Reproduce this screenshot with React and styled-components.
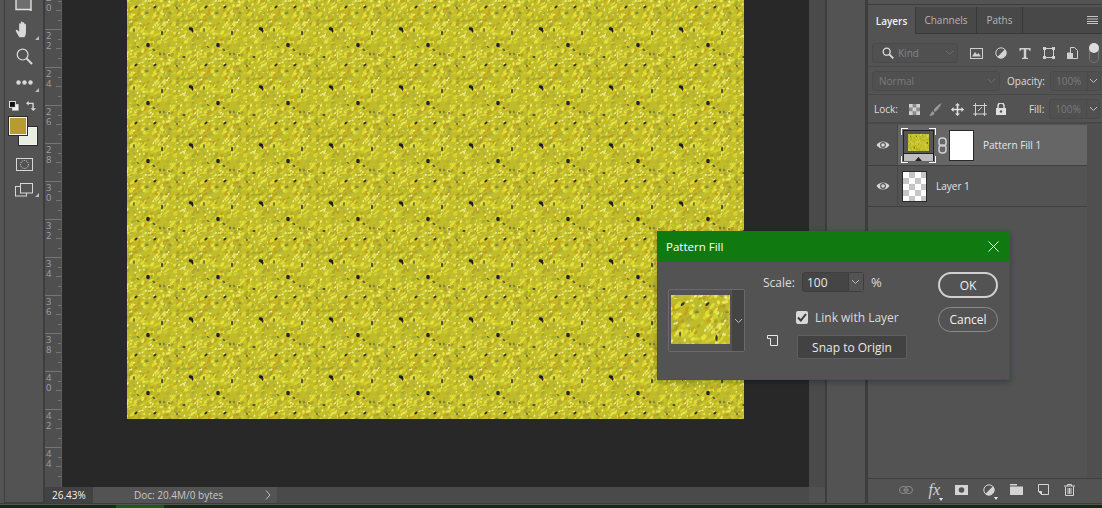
import React from 'react'
import styled, { createGlobalStyle } from 'styled-components'

const GlobalStyle = createGlobalStyle`
  html, body { margin: 0; padding: 0; background: #535353; overflow: hidden; }
  * { box-sizing: border-box; }
`

const RULER = ['20', '22', '24', '26', '28', '30', '32', '34', '36', '38', '40', '42', '44']

// x, y, rx, ry, rotation, colour of the dark seeds in one 70x58 tile
const DARK_SPOTS = [
  [64, 29, 2.4, 1.5, 20, '#1c1c22'], [65.500, 31, 1, 1.800, 0, '#1c1c22'],
  [35, 33, 0.9, 2.400, 0, '#35352a'], [21, 45, 1.800, 2.200, 0, '#22222a'],
  [27, 50, 1.500, 0.900, 30, '#5a5a3c'], [33, 54, 0.700, 1.500, 0, '#4c4c30'],
  [37, 54, 0.600, 1.200, 0, '#5a5a3c'], [42, 55, 1.100, 0.800, 0, '#5c5c3c'],
  [57, 57, 1.600, 1.100, 0, '#44443a'], [9, 7, 1.900, 0.900, -40, '#2c2c20'],
  [28, 7, 1.900, 0.900, -40, '#2c2c20'], [20, 13, 1.800, 0.500, 0, '#5c5c3a'],
  [43, 13, 1.800, 0.500, 0, '#64643e'], [7, 30, 0.800, 2, 0, '#5a5a3c'],
  [11, 47, 1.500, 0.700, 30, '#5a5a3c'], [50, 8, 0.900, 1.300, 0, '#6a6838'],
]

const COLORS = ['#d8d42c', '#e6e23c', '#c8c42a', '#b4b434', '#c2ba26', '#a4ac36', '#c4a21c', '#dedc34', '#bcb82c', '#e8e455', '#aca028', '#d0d030', '#f2f070', '#efeea0']

// small seeded generator so the tile is the same on every load
const makeBlobs = (count) => {
  let seed = 4711
  const rnd = () => {
    seed = (seed * 16807) % 2147483647
    return seed / 2147483647
  }
  const out = []
  for (let i = 0; i < count; i++) {
    const c = Math.floor(rnd() * COLORS.length)
    const pale = c >= 12
    out.push({
      x: rnd() * 76 - 3,
      y: rnd() * 64 - 3,
      rx: pale ? 1.300 : 1.100 + rnd() * 2.200,
      ry: pale ? 0.800 : 0.700 + rnd() * 1,
      rot: -70 + rnd() * 60,
      fill: COLORS[c],
    })
  }
  return out
}

const BLOBS = makeBlobs(600)

const Tile = ({ id, w, h, scale = 1 }) => (
  <>
    <filter id={`${id}-soft`} x="-5%" y="-5%" width="110%" height="110%">
      <feGaussianBlur stdDeviation={0.5 * scale} />
    </filter>
    <pattern id={id} width={w} height={h} patternUnits="userSpaceOnUse">
      <g filter={`url(#${id}-soft)`}>
        <g transform={`scale(${scale})`}>
          <rect x="-3" y="-3" width="76" height="64" fill="#c0bc2c" />
          {BLOBS.map((b, i) => (
            <ellipse key={i} cx={b.x} cy={b.y} rx={b.rx} ry={b.ry} fill={b.fill} transform={`rotate(${b.rot} ${b.x} ${b.y})`} />
          ))}
          {DARK_SPOTS.map(([x, y, rx, ry, rot, fill], i) => (
            <ellipse key={i} cx={x} cy={y} rx={rx} ry={ry} fill={fill} transform={`rotate(${rot} ${x} ${y})`} />
          ))}
        </g>
      </g>
    </pattern>
  </>
)

const Eye = () => (
  <svg width="14" height="10" viewBox="0 0 14 10">
    <path d="M0.5 5C3.5 0.2 10.5 0.2 13.5 5C10.5 9.8 3.5 9.8 0.5 5Z" fill="#d6d6d6" />
    <circle cx="7" cy="5" r="2.9" fill="#535353" />
    <circle cx="7" cy="5" r="1.8" fill="#d6d6d6" />
  </svg>
)

const Chevron = ({ color = '#a8a8a8' }) => (
  <svg width="9" height="6" viewBox="0 0 9 6">
    <path d="M1 1l3.5 3.5L8 1" fill="none" stroke={color} strokeWidth="1" />
  </svg>
)

const Corner = () => (
  <svg width="6" height="6" viewBox="0 0 6 6">
    <path d="M5 1v4H1z" fill="#bdbdbd" />
  </svg>
)

const MenuIcon = () => (
  <svg width="11" height="8" viewBox="0 0 11 8">
    <path d="M0 .5h11M0 3h11M0 5.500h11M0 7.500h11" stroke="#c4c4c4" strokeWidth="1" />
  </svg>
)

const HalfCircle = () => (
  <svg width="12" height="12" viewBox="0 0 12 12">
    <circle cx="6" cy="6" r="5.200" fill="#535353" stroke="#d4d4d4" strokeWidth="1" />
    <path d="M10 2.300A5.500 5.500 0 0 1 2.300 10z" fill="#d4d4d4" />
  </svg>
)

const TOOL = '#d8d8d8'

const App = () => (
  <Page>
    <GlobalStyle />
    <Main>
      <Toolbar>
        <ToolStrip>
          <ToolSlot $h={11} $align="flex-end">
            <svg width="18" height="11" viewBox="0 0 18 11">
              <path d="M1 0v9.500h15V0" fill="#6e6e6e" stroke="#e0e0e0" strokeWidth="1.400" />
              <path d="M17 8v3h-3z" fill="#bdbdbd" />
            </svg>
          </ToolSlot>
          <ToolSlot $h={26} $top={6}>
            <svg width="18" height="18" viewBox="0 0 20 20">
              <path d="M5 18C3 15 1 12 .8 10.500c0-1 1.300-1.200 2-.3L4.600 12V3.500c0-1.300 1.700-1.300 1.800 0V9V1.600c0-1.300 1.900-1.300 2 0V9V2.300c0-1.300 1.900-1.300 2 0V9.500V4c0-1.200 1.800-1.200 1.800 0v8.500c0 2.500-.8 4-1.700 5.500z" fill={TOOL} />
            </svg>
            <CornerMark><Corner /></CornerMark>
          </ToolSlot>
          <ToolSlot $h={24} $top={1}>
            <svg width="17" height="17" viewBox="0 0 18 18">
              <circle cx="7" cy="7" r="5.700" fill="none" stroke={TOOL} strokeWidth="1.300" />
              <path d="M11 11l6 6" stroke={TOOL} strokeWidth="2.200" />
            </svg>
          </ToolSlot>
          <ToolSlot $h={26} $top={1}>
            <svg width="17" height="5" viewBox="0 0 17 5">
              <circle cx="2.500" cy="2.500" r="2.200" fill={TOOL} />
              <circle cx="8.500" cy="2.500" r="2.200" fill={TOOL} />
              <circle cx="14.500" cy="2.500" r="2.200" fill={TOOL} />
            </svg>
            <CornerMark><Corner /></CornerMark>
          </ToolSlot>
          <SwapRow>
            <svg width="10" height="10" viewBox="0 0 11 11">
              <rect x="3.500" y="3.500" width="7" height="7" fill="#f0f0f0" />
              <rect x="0.500" y="0.500" width="6.500" height="6.500" fill="#111" stroke="#f0f0f0" />
            </svg>
            <svg width="10" height="10" viewBox="0 0 11 11">
              <path d="M0 2.500L3 0v1.800h5.500V8H11L8 11 5 8h2V3.200H3V5z" fill={TOOL} />
            </svg>
          </SwapRow>
          <Swatches>
            <BackSwatch />
            <FrontSwatch />
          </Swatches>
          <ToolSlot $h={20} $top={8}>
            <svg width="17" height="13" viewBox="0 0 17 13">
              <rect x=".5" y=".5" width="16" height="12" fill="none" stroke={TOOL} />
              <circle cx="8.500" cy="6.500" r="4" fill="none" stroke={TOOL} strokeDasharray="1 1" />
            </svg>
          </ToolSlot>
          <ToolSlot $h={20} $top={6}>
            <svg width="18" height="14" viewBox="0 0 18 14">
              <rect x=".5" y="3.500" width="11" height="9.500" fill="none" stroke={TOOL} />
              <rect x="5.500" y=".5" width="12" height="9.500" fill="#535353" stroke={TOOL} />
            </svg>
            <CornerMark><Corner /></CornerMark>
          </ToolSlot>
        </ToolStrip>
      </Toolbar>

      <DocColumn>
        <DocBody>
          <Ruler>
            {RULER.map((n, i) => (
              <RulerStep key={n} $first={i === 0}>
                <RulerDigits>{n}</RulerDigits>
              </RulerStep>
            ))}
          </Ruler>
          <Canvas>
            <svg width="617" height="419" style={{ display: 'block' }}>
              <defs>
                <Tile id="fill-big" w={70} h={58} />
              </defs>
              <rect width="617" height="419" fill="url(#fill-big)" />
            </svg>
          </Canvas>
          <ScrollTrack />
        </DocBody>
        <StatusBar>
          <ZoomField>26.43%</ZoomField>
          <DocInfo>
            Doc: 20.4M/0 bytes
            <svg width="6" height="10" viewBox="0 0 6 10">
              <path d="M1 .5L5 5 1 9.500" fill="none" stroke="#bdbdbd" />
            </svg>
          </DocInfo>
          <StatusRest />
          <StatusEnd />
        </StatusBar>
      </DocColumn>

      <DockGap />

      <Panel>
        <TabBar>
          <Tab $active $w={48}>Layers</Tab>
          <Tab $w={61}>Channels</Tab>
          <Tab $w={46}>Paths</Tab>
          <TabFill><MenuIcon /></TabFill>
        </TabBar>

        <OptionRow $top={9}>
          <KindField>
            <svg width="12" height="12" viewBox="0 0 12 12">
              <circle cx="4.700" cy="4.700" r="3.500" fill="none" stroke="#dedede" strokeWidth="1.300" />
              <path d="M7.300 7.300l4 4" stroke="#dedede" strokeWidth="1.800" />
            </svg>
            <FieldText>Kind</FieldText>
            <Chevron color="#6d6d6d" />
          </KindField>
          <FilterIcons>
            <svg width="13" height="11" viewBox="0 0 13 11">
              <rect x=".5" y=".5" width="12" height="10" fill="none" stroke="#d0d0d0" />
              <path d="M2 8.500L5 4l2 2.500L8.500 5l2.500 3.500z" fill="#d0d0d0" />
            </svg>
            <HalfCircle />
            <svg width="12" height="11" viewBox="0 0 12 11">
              <path d="M.5 0h11v3h-1L10 1.500H7.200V9.500L9 10v1H3v-1l1.800-.5V1.500H2L1.500 3h-1z" fill="#d0d0d0" />
            </svg>
            <svg width="12" height="12" viewBox="0 0 12 12">
              <rect x="1.500" y="1.500" width="9" height="9" fill="none" stroke="#d0d0d0" />
              <path d="M0 0h3v3H0zM9 0h3v3H9zM0 9h3v3H0zM9 9h3v3H9z" fill="#d0d0d0" />
            </svg>
            <svg width="11" height="12" viewBox="0 0 11 12">
              <path d="M3.500.5h4l3 3v8h-10V6h3z" fill="none" stroke="#d0d0d0" />
              <rect x="0" y="6" width="6" height="6" fill="#d0d0d0" />
            </svg>
          </FilterIcons>
          <FilterToggle />
        </OptionRow>
        <Rule $top={3} />

        <OptionRow $top={4}>
          <BlendField>
            <FieldText $strong>Normal</FieldText>
            <Chevron color="#6d6d6d" />
          </BlendField>
          <OptionLabel $left={7}>Opacity:</OptionLabel>
          <ValueField $left={5}>
            <span>100%</span>
            <ValueArrow><Chevron color="#c0c0c0" /></ValueArrow>
          </ValueField>
        </OptionRow>
        <Rule $top={3} />

        <OptionRow $top={4}>
          <OptionLabel $left={2}>Lock:</OptionLabel>
          <LockIcons>
            <svg width="11" height="11" viewBox="0 0 11 11">
              <rect width="11" height="11" fill="#8a8a8a" />
              <path d="M0 0h3.600v3.600H0zM7.300 0H11v3.600H7.300zM3.600 3.600h3.700v3.700H3.600zM0 7.300h3.600V11H0zM7.300 7.300H11V11H7.300z" fill="#d0d0d0" />
            </svg>
            <svg width="13" height="13" viewBox="0 0 13 13">
              <path d="M12.500 0C9 2 6 4.500 4.500 7.500L6 9C8.800 7 11 4 12.500 0zM3.800 8.200C2.300 8.500 2.300 11 0 12.500c3 .5 5.500-.5 5.400-2.700z" fill="#9a9a9a" />
            </svg>
            <svg width="13" height="13" viewBox="0 0 13 13">
              <path d="M6.500 0L9 2.500H7.300v3.200h3.200V4L13 6.500 10.500 9V7.300H7.300v3.200H9L6.500 13 4 10.500h1.700V7.300H2.500V9L0 6.500 2.500 4v1.700h3.200V2.500H4z" fill="#e0e0e0" />
            </svg>
            <svg width="14" height="13" viewBox="0 0 14 13">
              <rect x="2.500" y="2.500" width="9" height="8.500" fill="none" stroke="#d0d0d0" />
              <path d="M0 2.500h4M2.500 0v4M10 2.500h4M11.500 0v4M0 11h4M2.500 9v4M10 11h4M11.500 9v4M5 8l4-4" stroke="#d0d0d0" fill="none" />
            </svg>
            <svg width="10" height="12" viewBox="0 0 10 12">
              <path d="M2 5V3a3 3 0 0 1 6 0v2" fill="none" stroke="#e0e0e0" strokeWidth="1.400" />
              <path d="M0 5h10v7H0z" fill="#e0e0e0" />
              <circle cx="5" cy="8.500" r="1.200" fill="#535353" />
            </svg>
          </LockIcons>
          <OptionLabel $left={23}>Fill:</OptionLabel>
          <ValueField $left={5}>
            <span>100%</span>
            <ValueArrow><Chevron color="#c0c0c0" /></ValueArrow>
          </ValueField>
        </OptionRow>
        <Rule $top={3} $thick />

        <LayerList>
          <LayerRows>
            <LayerRow $selected>
              <EyeCell><Eye /></EyeCell>
              <SelectedThumb>
                <FillThumb>
                  <svg width="21" height="17" style={{ display: 'block' }}>
                    <defs>
                      <Tile id="fill-thumb" w={21} h={17.400} scale={0.3} />
                    </defs>
                    <rect width="21" height="17" fill="url(#fill-thumb)" />
                  </svg>
                  <ThumbBase>
                    <svg width="7" height="4" viewBox="0 0 7 4">
                      <path d="M3.500 0L7 4H0z" fill="#222" />
                    </svg>
                  </ThumbBase>
                </FillThumb>
              </SelectedThumb>
              <ChainSlot>
                <svg width="9" height="17" viewBox="0 0 9 17">
                  <rect x="1" y="1" width="7" height="8" rx="3" fill="none" stroke="#cfcfcf" strokeWidth="1.500" />
                  <rect x="1" y="8" width="7" height="8" rx="3" fill="none" stroke="#cfcfcf" strokeWidth="1.500" />
                </svg>
              </ChainSlot>
              <MaskThumb />
              <LayerName>Pattern Fill 1</LayerName>
            </LayerRow>
            <LayerRow>
              <EyeCell><Eye /></EyeCell>
              <CheckerThumb />
              <LayerName>Layer 1</LayerName>
            </LayerRow>
          </LayerRows>
          <LayerScroll />
        </LayerList>

        <PanelFooter>
          <svg width="14" height="8" viewBox="0 0 14 8">
            <rect x=".5" y=".5" width="8" height="7" rx="3.500" fill="none" stroke="#8a8a8a" />
            <rect x="5.500" y=".5" width="8" height="7" rx="3.500" fill="none" stroke="#8a8a8a" />
            <path d="M4 4h6" stroke="#8a8a8a" />
          </svg>
          <FooterMenu>
            <FxMark>fx</FxMark>
          </FooterMenu>
          <svg width="13" height="10" viewBox="0 0 13 10">
            <rect width="13" height="10" fill="#d4d4d4" />
            <circle cx="6.500" cy="5" r="2.800" fill="#535353" />
          </svg>
          <FooterMenu>
            <HalfCircle />
          </FooterMenu>
          <svg width="13" height="11" viewBox="0 0 13 11">
            <path d="M0 0h7v1.500H0zM0 2.500h13V11H0z" fill="#d4d4d4" />
          </svg>
          <svg width="11" height="11" viewBox="0 0 11 11">
            <path d="M.5.500h10v10H3.500L.5 7.500z" fill="none" stroke="#d4d4d4" />
            <path d="M0 7h4v4z" fill="#d4d4d4" />
          </svg>
          <svg width="11" height="12" viewBox="0 0 11 12">
            <path d="M0 2h11M3.500 2V.5h4V2M1.500 2.500v9h8v-9M4 4v6M5.500 4v6M7 4v6" fill="none" stroke="#d4d4d4" />
          </svg>
        </PanelFooter>
      </Panel>

      <Dialog>
        <DialogTitle>
          <span>Pattern Fill</span>
          <svg width="11" height="11" viewBox="0 0 11 11">
            <path d="M.5.500l10 10M10.500.500l-10 10" stroke="#fff" strokeWidth="1" />
          </svg>
        </DialogTitle>
        <DialogBody>
          <PatternPicker>
            <PatternPreview>
              <svg width="59" height="49" style={{ display: 'block' }}>
                <defs>
                  <Tile id="fill-preview" w={91} h={75.400} scale={1.300} />
                </defs>
                <rect width="59" height="49" fill="url(#fill-preview)" />
              </svg>
            </PatternPreview>
            <PickerArrow><Chevron color="#bdbdbd" /></PickerArrow>
          </PatternPicker>
          <OriginMark>
            <svg width="11" height="11" viewBox="0 0 11 11">
              <path d="M.5.500h10v10H3.500V3.500H.5z" fill="none" stroke="#e8e8e8" />
            </svg>
          </OriginMark>
          <DialogFields>
            <ScaleRow>
              <DialogLabel>Scale:</DialogLabel>
              <ScaleField>
                <span>100</span>
                <ScaleArrow><Chevron color="#bdbdbd" /></ScaleArrow>
              </ScaleField>
              <PercentMark>%</PercentMark>
            </ScaleRow>
            <CheckRow>
              <CheckBox>
                <svg width="10" height="9" viewBox="0 0 10 9">
                  <path d="M1 4.500L3.800 7.500 9 1" fill="none" stroke="#3a3a3a" strokeWidth="2" />
                </svg>
              </CheckBox>
              <DialogLabel>Link with Layer</DialogLabel>
            </CheckRow>
            <SnapButton>Snap to Origin</SnapButton>
          </DialogFields>
          <DialogButtons>
            <PillButton $primary>OK</PillButton>
            <PillButton>Cancel</PillButton>
          </DialogButtons>
        </DialogBody>
      </Dialog>
    </Main>
    <BottomGap />
    <TaskStrip>
      <TaskItem />
    </TaskStrip>
  </Page>
)

export default App

const Page = styled.div`
  width: 1102px;
  height: 508px;
  overflow: hidden;
  display: flex;
  flex-direction: column;
  background: #535353;
  font-family: "Open Sans", "Noto Sans", "Liberation Sans", sans-serif;
  font-size: 10px;
  color: #e0e0e0;
`

const Main = styled.div`
  position: relative;
  height: 503px;
  display: flex;
`

const Toolbar = styled.div`
  width: 45px;
  flex: none;
  padding-left: 4px;
  background: #535353;
  border-right: 2px solid #3d3d3d;
`

const ToolStrip = styled.div`
  height: 100%;
  display: flex;
  flex-direction: column;
  border-left: 1px solid #3d3d3d;
  border-bottom: 1px solid #3d3d3d;
`

const ToolSlot = styled.div`
  position: relative;
  height: ${p => p.$h}px;
  margin-top: ${p => p.$top || 0}px;
  display: flex;
  justify-content: center;
  align-items: ${p => p.$align || 'center'};
  flex: none;
`

const CornerMark = styled.span`
  position: absolute;
  right: 3px;
  bottom: 2px;
  display: flex;
`

const SwapRow = styled.div`
  display: flex;
  justify-content: space-between;
  padding: 0 7px 0 4px;
  margin-top: 6px;
  height: 11px;
  flex: none;
`

const Swatches = styled.div`
  position: relative;
  height: 29px;
  margin-top: 5px;
  flex: none;
`

const FrontSwatch = styled.div`
  position: absolute;
  left: 4px;
  top: 0;
  width: 18px;
  height: 18px;
  background: #b89b30;
  border: 1px solid #f2f2f2;
  outline: 1px solid #2a2a2a;
`

const BackSwatch = styled.div`
  position: absolute;
  left: 14px;
  top: 10px;
  width: 18px;
  height: 18px;
  background: #e8efe0;
  border: 1px solid #f2f2f2;
  outline: 1px solid #2a2a2a;
`

const DocColumn = styled.div`
  width: 780px;
  flex: none;
  display: flex;
  flex-direction: column;
`

const DocBody = styled.div`
  height: 487px;
  display: flex;
`

const Ruler = styled.div`
  width: 17px;
  flex: none;
  background: #4f4f4f;
  overflow: hidden;
  border-right: 1px solid #5f5f5f;
`

const RulerStep = styled.div`
  height: 38px;
  padding: 1px 0 0 1px;
  margin-top: ${p => (p.$first ? -9 : 0)}px;
  border-top: 1px solid #767676;
  background-image:
    linear-gradient(#767676, #767676),
    linear-gradient(#767676, #767676),
    linear-gradient(#767676, #767676);
  background-repeat: no-repeat;
  background-size: 3px 1px, 5px 1px, 3px 1px;
  background-position: right 9px, right 18px, right 28px;
`

const RulerDigits = styled.div`
  width: 7px;
  word-break: break-all;
  font-size: 9.500px;
  line-height: 10px;
  color: #9aa2ad;
`

const Canvas = styled.div`
  flex: 1;
  padding-left: 65px;
  background: #282828;
  overflow: hidden;
`

const ScrollTrack = styled.div`
  width: 16px;
  flex: none;
  background: #4a4a4a;
`

const StatusBar = styled.div`
  height: 16px;
  display: flex;
  line-height: 16px;
  font-size: 10px;
`

const ZoomField = styled.div`
  width: 48px;
  padding-left: 7px;
  background: #424242;
  color: #f0f0f0;
`

const DocInfo = styled.div`
  width: 184px;
  display: flex;
  align-items: center;
  justify-content: space-between;
  padding: 0 6px 0 41px;
  background: #535353;
  color: #c8c8c8;
`

const StatusRest = styled.div`
  flex: 1;
  background: #4a4a4a;
`

const StatusEnd = styled.div`
  width: 16px;
  background: #515151;
`

const DockGap = styled.div`
  width: 43px;
  flex: none;
  background: #535353;
  border-left: 2px solid #3d3d3d;
  border-right: 3px solid #3d3d3d;
`

const Panel = styled.div`
  flex: 1;
  display: flex;
  flex-direction: column;
  min-width: 0;
  background: #535353;
  padding-top: 4px;
`

const TabBar = styled.div`
  height: 30px;
  display: flex;
  align-items: stretch;
  padding-top: 2px;
  border-top: 1px solid #3d3d3d;
  flex: none;
`

const Tab = styled.div`
  width: ${p => p.$w}px;
  flex: none;
  display: flex;
  align-items: center;
  justify-content: center;
  font-weight: ${p => (p.$active ? 600 : 400)};
  color: ${p => (p.$active ? '#f2f2f2' : '#b4b4b4')};
  background: ${p => (p.$active ? '#535353' : '#484848')};
  border-right: 1px solid #383838;
  border-bottom: ${p => (p.$active ? 'none' : '1px solid #383838')};
`

const TabFill = styled.div`
  flex: 1;
  display: flex;
  align-items: center;
  justify-content: flex-end;
  padding-right: 4px;
  background: #484848;
  border-bottom: 1px solid #383838;
`

const OptionRow = styled.div`
  height: 20px;
  margin-top: ${p => p.$top}px;
  display: flex;
  align-items: center;
  padding-left: 4px;
  flex: none;
`

const Rule = styled.div`
  height: ${p => (p.$thick ? 2 : 1)}px;
  margin-top: ${p => p.$top}px;
  background: #484848;
  flex: none;
`

const KindField = styled.div`
  width: 86px;
  height: 20px;
  display: flex;
  align-items: center;
  padding: 0 3px 0 9px;
  border: 1px solid #4a4a4a;
  border-radius: 3px;
  background: #505050;
`

const FieldText = styled.span`
  flex: 1;
  padding-left: ${p => (p.$strong ? 6 : 4)}px;
  color: ${p => (p.$strong ? '#7b7b7b' : '#868686')};
`

const FilterIcons = styled.div`
  display: flex;
  align-items: center;
  gap: 12px;
  margin-left: 12px;
`

const FilterToggle = styled.div`
  position: relative;
  width: 10px;
  height: 20px;
  margin-left: 11px;
  border-radius: 5px;
  border: 1px solid #787878;

  &::before {
    content: "";
    position: absolute;
    left: -1px;
    top: -1px;
    width: 10px;
    height: 10px;
    border-radius: 50%;
    background: #dcdcdc;
  }
`

const BlendField = styled.div`
  width: 128px;
  height: 20px;
  display: flex;
  align-items: center;
  padding-right: 3px;
  border: 1px solid #4a4a4a;
  border-radius: 3px;
  background: #505050;
`

const OptionLabel = styled.span`
  margin-left: ${p => p.$left}px;
  color: #dcdcdc;
`

const ValueField = styled.div`
  width: 51px;
  height: 20px;
  display: flex;
  align-items: center;
  margin-left: ${p => p.$left}px;
  padding-left: 5px;
  border: 1px solid #4a4a4a;
  border-radius: 3px;
  color: #7b7b7b;
  background: #505050;

  span:first-child { flex: 1; }
`

const ValueArrow = styled.span`
  width: 13px;
  height: 18px;
  display: flex;
  align-items: center;
  justify-content: center;
  border-left: 1px solid #4a4a4a;
`

const LockIcons = styled.div`
  display: flex;
  align-items: center;
  gap: 9px;
  margin-left: 11px;
`

const LayerList = styled.div`
  flex: 1;
  display: flex;
  min-height: 0;
  padding-top: 1px;
`

const LayerRows = styled.div`
  flex: 1;
`

const LayerScroll = styled.div`
  width: 15px;
  flex: none;
  background: #4f4f4f;
`

const LayerRow = styled.div`
  height: 41px;
  display: flex;
  align-items: center;
  background: ${p => (p.$selected ? '#666666' : '#535353')};
  border-bottom: 1px solid #3f3f3f;
`

const EyeCell = styled.div`
  width: 30px;
  height: 100%;
  flex: none;
  display: flex;
  align-items: center;
  justify-content: center;
  background: #535353;
  border-right: 1px solid #474747;
`

const SelectedThumb = styled.div`
  width: 35px;
  height: 35px;
  margin-left: 3px;
  flex: none;
  padding: 2px;
  background:
    linear-gradient(#fff, #fff) 0 0 / 7px 1px no-repeat,
    linear-gradient(#fff, #fff) 100% 0 / 7px 1px no-repeat,
    linear-gradient(#fff, #fff) 0 100% / 7px 1px no-repeat,
    linear-gradient(#fff, #fff) 100% 100% / 7px 1px no-repeat,
    linear-gradient(#fff, #fff) 0 0 / 1px 7px no-repeat,
    linear-gradient(#fff, #fff) 100% 0 / 1px 7px no-repeat,
    linear-gradient(#fff, #fff) 0 100% / 1px 7px no-repeat,
    linear-gradient(#fff, #fff) 100% 100% / 1px 7px no-repeat;
`

const FillThumb = styled.div`
  width: 31px;
  height: 31px;
  padding: 3px 4px 0;
  background: #555;
  border: 1px solid #222;
`

const ThumbBase = styled.div`
  width: 29px;
  height: 8px;
  margin: 2px 0 0 -4px;
  display: flex;
  align-items: flex-end;
  justify-content: center;
  background: #bdbdbd;
  border-top: 1px solid #222;
`

const ChainSlot = styled.div`
  width: 13px;
  flex: none;
  display: flex;
  justify-content: center;
`

const MaskThumb = styled.div`
  width: 25px;
  height: 31px;
  flex: none;
  background: #fff;
  border: 1px solid #2a2a2a;
`

const CheckerThumb = styled.div`
  width: 25px;
  height: 31px;
  margin-left: 4px;
  flex: none;
  border: 1px solid #2a2a2a;
  background: repeating-conic-gradient(#c6c6c6 0 25%, #fff 0 50%) 0 0 / 12px 12px;
`

const LayerName = styled.span`
  margin-left: 9px;
  color: #e6e6e6;
`

const PanelFooter = styled.div`
  height: 25px;
  flex: none;
  display: flex;
  align-items: center;
  justify-content: flex-end;
  gap: 15px;
  padding: 0 27px 3px 0;
  background: #535353;
  border-top: 1px solid #3f3f3f;
`

const FooterMenu = styled.span`
  position: relative;
  display: flex;
  align-items: center;

  &::after {
    content: "";
    position: absolute;
    right: -3px;
    bottom: -4px;
    border: 2px solid transparent;
    border-top: 3px solid #e8e8e8;
    border-bottom: none;
  }
`

const FxMark = styled.span`
  font-family: "Liberation Serif", serif;
  font-style: italic;
  font-size: 16px;
  line-height: 14px;
  color: #d4d4d4;
`

const Dialog = styled.div`
  position: absolute;
  left: 657px;
  top: 231px;
  width: 353px;
  height: 149px;
  background: #535353;
  border: 1px solid #107a10;
  box-shadow: 0 2px 6px rgba(0, 0, 0, 0.3);
`

const DialogTitle = styled.div`
  height: 30px;
  display: flex;
  align-items: center;
  justify-content: space-between;
  padding: 0 10px 2px 8px;
  background: #107a10;
  font-size: 11.500px;
  color: #fff;
`

const DialogBody = styled.div`
  display: flex;
  align-items: flex-start;
`

const PatternPicker = styled.div`
  width: 77px;
  height: 63px;
  margin: 27px 0 0 10px;
  flex: none;
  display: flex;
  border: 1px solid #6a6a6a;
  border-radius: 2px;
`

const PatternPreview = styled.div`
  flex: 1;
  padding: 5px 2px;
`

const PickerArrow = styled.div`
  width: 12px;
  display: flex;
  align-items: center;
  justify-content: center;
  background: #444;
  border-left: 1px solid #444;
`

const OriginMark = styled.div`
  width: 11px;
  height: 11px;
  margin: 73px 0 0 22px;
  flex: none;
  display: flex;
`

const DialogFields = styled.div`
  width: 140px;
  flex: none;
  margin-left: -15px;
  padding-top: 10px;
`

const ScaleRow = styled.div`
  display: flex;
  align-items: center;
  height: 20px;
`

const DialogLabel = styled.span`
  font-size: 12px;
  color: #dcdcdc;
  white-space: nowrap;
`

const PercentMark = styled.span`
  margin-left: 7px;
  font-size: 13px;
  color: #dcdcdc;
`

const ScaleField = styled.div`
  width: 62px;
  height: 20px;
  margin-left: 7px;
  display: flex;
  align-items: center;
  padding-left: 4px;
  background: #454545;
  border: 1px solid #3e3e3e;
  border-radius: 3px;

  span:first-child { flex: 1; color: #e8e8e8; font-size: 12px; }
`

const ScaleArrow = styled.span`
  width: 15px;
  height: 18px;
  display: flex;
  align-items: center;
  justify-content: center;
  background: #535353;
  border-left: 1px solid #3e3e3e;
`

const CheckRow = styled.div`
  display: flex;
  align-items: center;
  gap: 7px;
  height: 14px;
  margin: 18px 0 0 33px;
`

const CheckBox = styled.span`
  width: 12px;
  height: 13px;
  display: flex;
  align-items: center;
  justify-content: center;
  border-radius: 2px;
  background: #d8d8d8;
`

const SnapButton = styled.div`
  width: 110px;
  height: 24px;
  margin: 11px 0 0 34px;
  display: flex;
  align-items: center;
  justify-content: center;
  background: #424242;
  border: 1px solid #5e5e5e;
  border-radius: 2px;
  font-size: 12px;
  color: #e8e8e8;
`

const DialogButtons = styled.div`
  margin-left: auto;
  width: 60px;
  margin-right: 11px;
  padding-top: 10px;
  display: flex;
  flex-direction: column;
  gap: 9px;
`

const PillButton = styled.div`
  height: ${p => (p.$primary ? 26 : 25)}px;
  display: flex;
  align-items: center;
  justify-content: center;
  border-radius: 13px;
  border: ${p => (p.$primary ? '2px solid #d0d0d0' : '1px solid #8a8a8a')};
  font-size: 12px;
  color: #f0f0f0;
`

const BottomGap = styled.div`
  height: 2px;
  background: #535353;
  border-top: 1px solid #3d3d3d;
`

const TaskStrip = styled.div`
  height: 3px;
  background: #142a14;
  padding-left: 116px;
`

const TaskItem = styled.div`
  width: 48px;
  height: 3px;
  background: #1a5a1a;
`
